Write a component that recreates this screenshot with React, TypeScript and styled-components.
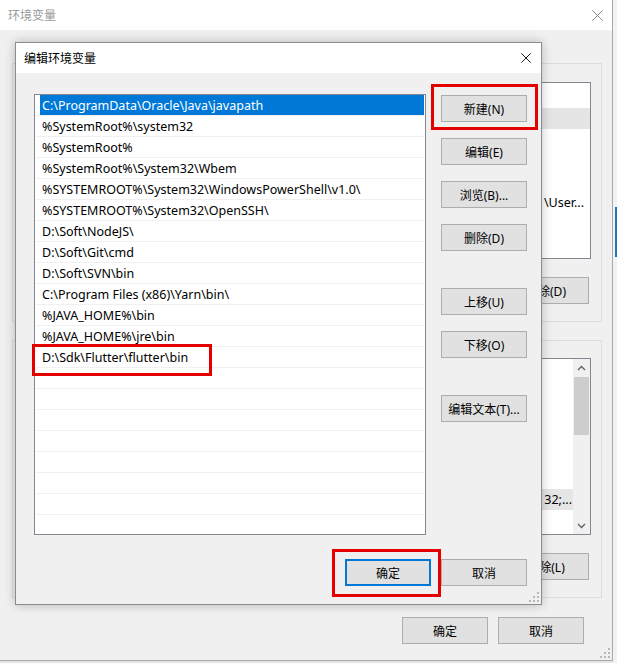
import styled, { createGlobalStyle, css } from "styled-components";

// global

const GlobalStyle = createGlobalStyle`
  html, body {
    margin: 0;
    padding: 0;
  }
  body {
    background: #f0f0f0;
    font-family: "Noto Sans", "Noto Sans CJK SC", sans-serif;
    font-size: 12px;
    color: #000;
  }
  * {
    box-sizing: border-box;
  }
`;

// desktop + background window (mostly covered by the dialog)

const Desktop = styled.div`
  position: relative;
  display: flex;
  width: 617px;
  height: 663px;
  overflow: hidden;
  background: #e4e4e4;
`;

const BackWindow = styled.div`
  position: relative;
  display: flex;
  flex-direction: column;
  flex: 0 0 613px;
  height: 661px;
  background: #f0f0f0;
  border-right: 1px solid #a9a9a9;
  border-bottom: 1px solid #a9a9a9;
`;

const SideStrip = styled.div`
  flex: 1;
  display: flex;
  flex-direction: column;
  padding: 207px 0 0 2px;
  background: #f2f2f2;
`;

const SideAccent = styled.div`
  height: 50px;
  background: #1f74c4;
`;

const TitleBar = styled.div<{ $inactive?: boolean }>`
  display: flex;
  align-items: center;
  justify-content: space-between;
  height: 30px;
  flex-shrink: 0;
  padding-left: 8px;
  background: #fff;
  color: ${(p) => (p.$inactive ? "#9a9a9a" : "#000")};
`;

const CloseButton = styled.div<{ $color: string }>`
  display: flex;
  align-items: center;
  justify-content: center;
  width: 30px;
  height: 100%;
  color: ${(p) => p.$color};
`;

const BackBody = styled.div`
  display: flex;
  flex-direction: column;
  padding: 33px 10px 0 12px;
`;

const GroupBox = styled.div<{ $padTop: number }>`
  display: flex;
  flex-direction: column;
  gap: 18px;
  border: 1px solid #dcdcdc;
  padding: ${(p) => p.$padTop}px 10px 17px 11px;

  & + & {
    margin-top: 18px;
  }
`;

const VarList = styled.div`
  display: flex;
  height: 177px;
  background: #fff;
  border: 1px solid #828790;
  overflow: hidden;
`;

const VarColumns = styled.div`
  flex: 1;
  min-width: 0;
  display: flex;
  flex-direction: column;
  padding-top: 25px;
`;

const VarRow = styled.div<{ $selected?: boolean }>`
  display: flex;
  justify-content: flex-end;
  align-items: center;
  height: 21px;
  flex-shrink: 0;
  white-space: nowrap;
  background: ${(p) => (p.$selected ? "#e5e5e5" : "transparent")};
`;

const VarValue = styled.span<{ $padRight: number }>`
  padding-right: ${(p) => p.$padRight}px;
  font-size: 12.5px;
`;

const ScrollBar = styled.div`
  display: flex;
  flex-direction: column;
  width: 17px;
  flex-shrink: 0;
  background: #f0f0f0;
`;

const ScrollArrow = styled.div`
  display: flex;
  align-items: center;
  justify-content: center;
  height: 17px;
  flex-shrink: 0;
`;

const ScrollTrack = styled.div`
  flex: 1;
  padding-top: 1px;
`;

const ScrollThumb = styled.div`
  height: 58px;
  margin: 0 1px;
  background: #cdcdcd;
`;

const ButtonRow = styled.div<{ $padRight: number }>`
  display: flex;
  justify-content: flex-end;
  gap: 10px;
  padding-right: ${(p) => p.$padRight}px;
`;

const FooterRow = styled(ButtonRow)`
  margin-top: 19px;
`;

const Button = styled.button<{ $default?: boolean }>`
  position: relative;
  width: 86px;
  height: 27px;
  flex-shrink: 0;
  padding: 0;
  font-family: inherit;
  font-size: 12px;
  color: #000;
  background: #e1e1e1;
  border: ${(p) => (p.$default ? "2px solid #0078d7" : "1px solid #adadad")};
`;

const CornerGrip = styled.div`
  position: absolute;
  right: 2px;
  bottom: 2px;
  display: flex;
`;

// edit dialog

const Dialog = styled.div`
  position: absolute;
  left: 15px;
  top: 42px;
  width: 527px;
  height: 563px;
  display: flex;
  flex-direction: column;
  background: #f0f0f0;
  border: 1px solid #8c8c8c;
  box-shadow: 0 0 10px rgba(0, 0, 0, 0.24);
`;

const DialogBody = styled.div`
  display: flex;
  flex-direction: column;
  padding: 21px 14px 0 18px;
`;

const DialogMain = styled.div`
  display: flex;
  align-items: flex-start;
  gap: 15px;
`;

const PathList = styled.div`
  display: flex;
  flex-direction: column;
  width: 392px;
  height: 441px;
  padding: 0 1px;
  background: #fff;
  border: 1px solid #828790;
`;

const PathRow = styled.div`
  position: relative;
  display: flex;
  height: 21px;
  flex-shrink: 0;
  padding-left: 4px;
  border-bottom: 1px solid #f0f0f0;
`;

const PathText = styled.div<{ $selected?: boolean }>`
  flex: 1;
  height: 20px;
  padding-left: 2px;
  font-size: 12.5px;
  line-height: 22px;
  white-space: nowrap;
  color: ${(p) => (p.$selected ? "#fff" : "#000")};
  background: ${(p) => (p.$selected ? "#0078d7" : "transparent")};
`;

const ButtonColumn = styled.div`
  display: flex;
  flex-direction: column;
  gap: 16px;
  margin-top: 1px;
`;

const SectionButton = styled(Button)`
  margin-top: 21px;
`;

const DialogFooter = styled(ButtonRow)`
  margin-top: 24px;
`;

// red annotation frames drawn over the screenshot

const RedFrame = styled.span<{ $top: number; $left: number; $w: number; $h: number }>`
  position: absolute;
  top: ${(p) => p.$top}px;
  left: ${(p) => p.$left}px;
  width: ${(p) => p.$w}px;
  height: ${(p) => p.$h}px;
  border: 3px solid #e50000;
  pointer-events: none;
  z-index: 2;
`;

// icons

const CloseIcon = ({ size }: { size: number }) => (
  <svg width={size} height={size} viewBox="0 0 10 10">
    <path d="M0.3 0.3L9.7 9.7M9.7 0.3L0.3 9.7" stroke="currentColor" strokeWidth="0.9" fill="none" />
  </svg>
);

const Chevron = ({ up }: { up?: boolean }) => (
  <svg width="9" height="6" viewBox="0 0 9 6">
    <path d={up ? "M1 5L4.5 1.5L8 5" : "M1 1L4.5 4.5L8 1"} stroke="#606060" strokeWidth="1.3" fill="none" />
  </svg>
);

const gripDots = [
  [8, 0],
  [8, 4],
  [4, 4],
  [8, 8],
  [4, 8],
  [0, 8],
];

const Grip = () => (
  <svg width="10" height="10" viewBox="0 0 10 10">
    {gripDots.map(([x, y]) => (
      <rect key={`${x}-${y}`} x={x} y={y} width="2" height="2" fill="#b8b8b8" />
    ))}
  </svg>
);

// data

const paths = [
  "C:\\ProgramData\\Oracle\\Java\\javapath",
  "%SystemRoot%\\system32",
  "%SystemRoot%",
  "%SystemRoot%\\System32\\Wbem",
  "%SYSTEMROOT%\\System32\\WindowsPowerShell\\v1.0\\",
  "%SYSTEMROOT%\\System32\\OpenSSH\\",
  "D:\\Soft\\NodeJS\\",
  "D:\\Soft\\Git\\cmd",
  "D:\\Soft\\SVN\\bin",
  "C:\\Program Files (x86)\\Yarn\\bin\\",
  "%JAVA_HOME%\\bin",
  "%JAVA_HOME%\\jre\\bin",
  "D:\\Sdk\\Flutter\\flutter\\bin",
];

const pathRows = [...paths, ...Array(20 - paths.length).fill("")];

type VarTableProps = {
  rowCount: number;
  selected: number;
  clipRow: number;
  clipText: string;
  clipRight: number;
  scroll?: boolean;
};

// only the value column's right edge shows beside the dialog
const VarTable = ({ rowCount, selected, clipRow, clipText, clipRight, scroll }: VarTableProps) => (
  <VarList>
    <VarColumns>
      {Array.from({ length: rowCount }, (_, i) => (
        <VarRow key={i} $selected={i === selected}>
          {i === clipRow && <VarValue $padRight={clipRight}>{clipText}</VarValue>}
        </VarRow>
      ))}
    </VarColumns>
    {scroll && (
      <ScrollBar>
        <ScrollArrow>
          <Chevron up />
        </ScrollArrow>
        <ScrollTrack>
          <ScrollThumb />
        </ScrollTrack>
        <ScrollArrow>
          <Chevron />
        </ScrollArrow>
      </ScrollBar>
    )}
  </VarList>
);

const App = () => {
  return (
    <>
      <GlobalStyle />
      <Desktop>
        <BackWindow>
          <TitleBar $inactive>
            <span>环境变量</span>
            <CloseButton $color="#8a8a8a">
              <CloseIcon size={11} />
            </CloseButton>
          </TitleBar>
          <BackBody>
            <GroupBox $padTop={18}>
              <VarTable rowCount={7} selected={0} clipRow={4} clipText="\User..." clipRight={6} />
              <ButtonRow $padRight={2}>
                <Button>删除(D)</Button>
              </ButtonRow>
            </GroupBox>
            <GroupBox $padTop={17}>
              <VarTable rowCount={7} selected={5} clipRow={5} clipText="32;..." clipRight={1} scroll />
              <ButtonRow $padRight={2}>
                <Button>删除(L)</Button>
              </ButtonRow>
            </GroupBox>
            <FooterRow $padRight={18}>
              <Button>确定</Button>
              <Button>取消</Button>
            </FooterRow>
          </BackBody>
          <CornerGrip>
            <Grip />
          </CornerGrip>
        </BackWindow>
        <SideStrip>
          <SideAccent />
        </SideStrip>

        <Dialog>
          <TitleBar>
            <span>编辑环境变量</span>
            <CloseButton $color="#000">
              <CloseIcon size={10} />
            </CloseButton>
          </TitleBar>
          <DialogBody>
            <DialogMain>
              <PathList>
                {pathRows.map((p, i) => (
                  <PathRow key={i}>
                    <PathText $selected={i === 0}>{p}</PathText>
                    {i === 12 && <RedFrame $top={-3} $left={-4} $w={180} $h={32} />}
                  </PathRow>
                ))}
              </PathList>
              <ButtonColumn>
                <Button>
                  新建(N)
                  <RedFrame $top={-12} $left={-11} $w={107} $h={46} />
                </Button>
                <Button>编辑(E)</Button>
                <Button>浏览(B)...</Button>
                <Button>删除(D)</Button>
                <SectionButton>上移(U)</SectionButton>
                <Button>下移(O)</Button>
                <SectionButton>编辑文本(T)...</SectionButton>
              </ButtonColumn>
            </DialogMain>
            <DialogFooter $padRight={0}>
              <Button $default>
                确定
                <RedFrame $top={-12} $left={-15} $w={109} $h={48} />
              </Button>
              <Button>取消</Button>
            </DialogFooter>
          </DialogBody>
          <CornerGrip>
            <Grip />
          </CornerGrip>
        </Dialog>
      </Desktop>
    </>
  );
};

export default App;
